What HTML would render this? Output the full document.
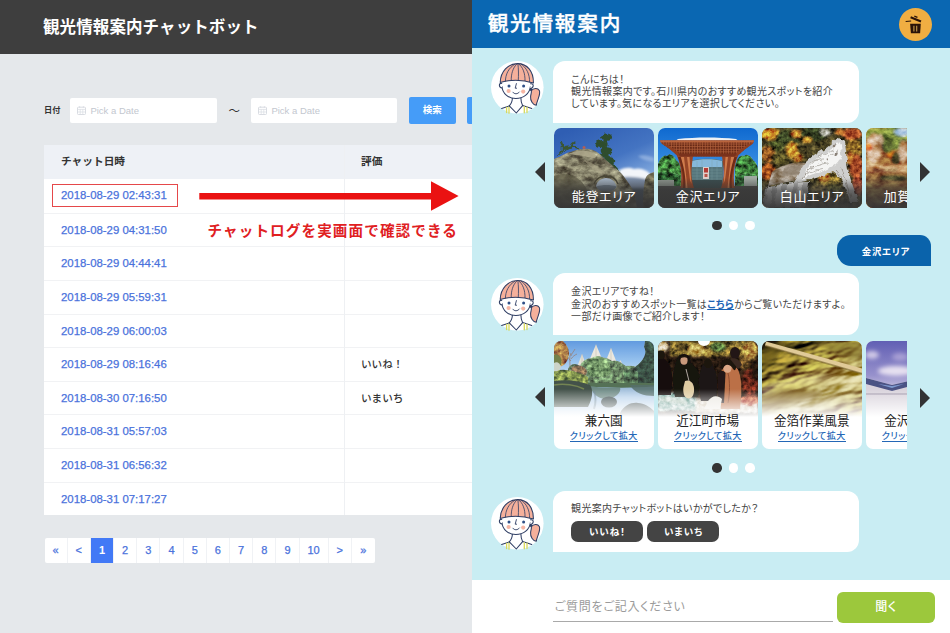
<!DOCTYPE html>
<html lang="ja">
<head>
<meta charset="utf-8">
<title>観光情報案内チャットボット</title>
<style>
*{box-sizing:border-box;margin:0;padding:0}
html,body{width:950px;height:633px;overflow:hidden}
body{position:relative;background:#e5e8eb;font-family:"Liberation Sans","Noto Sans CJK JP",sans-serif;color:#333}
.abs{position:absolute}
/* ---------- left admin ---------- */
#lhead{left:0;top:0;width:473px;height:53.6px;background:#3e3e3e}
#ltitle{left:43px;top:.5px;height:53px;line-height:53px;color:#fff;font-size:16.5px;font-weight:700;white-space:nowrap;letter-spacing:.1px}
.lbl{left:44px;top:105.2px;font-size:8.2px;font-weight:700;line-height:12px;color:#333}
.inp{top:98px;height:25px;background:#fff;border-radius:2px}
.inp span{position:absolute;left:20.4px;top:0;line-height:25px;font-size:9.5px;color:#c3c7cf;white-space:nowrap}
.inp svg{position:absolute;left:7px;top:8px}
.btn{top:97px;height:27px;background:#459cf8;border-radius:2px;color:#fff;font-size:9.5px;font-weight:700;text-align:center;line-height:25px}
#tbl{left:44px;top:145px;width:440px;height:370px;background:#fff}
#thead{left:0;top:0;width:440px;height:34.2px;background:#eef1f6}
.th{top:-.8px;height:34.2px;line-height:34.2px;font-size:10.7px;font-weight:700;color:#333;white-space:nowrap}
.row{left:0;width:440px;height:33.6px;border-top:1px solid #f1f2f4}
.row a{position:absolute;left:17px;top:0;line-height:32.6px;font-size:11.4px;color:#4a72dc;white-space:nowrap;text-decoration:none;-webkit-text-stroke:.25px #4a72dc}
.row span{position:absolute;left:317px;top:0;line-height:32.6px;font-size:10.6px;font-weight:500;color:#333;white-space:nowrap}
#colline{left:300px;top:0;width:1px;height:370px;background:#eef0f3}
#pg{left:44.5px;top:538.3px;height:24.6px;background:#fff;border-radius:2px;display:flex;overflow:hidden}
#pg div{width:23.2px;height:24.6px;line-height:24.6px;text-align:center;font-size:11px;color:#4a72dc;border-right:1px solid #f0f2f5;-webkit-text-stroke:.25px #4a72dc}
#pg div.w{width:29px}
#pg div.on{background:#4279f6;color:#fff;font-weight:700;-webkit-text-stroke:0}
#pg div:last-child{border-right:0}
/* ---------- right chat ---------- */
#chat{left:472.3px;top:0;width:478px;height:633px;background:#c9edf3;overflow:hidden}
#rhead{left:0;top:0;width:478px;height:48.3px;background:#0a67b2}
#rtitle{left:15.4px;top:.4px;height:48px;line-height:48px;color:#fff;font-size:20.6px;font-weight:500;-webkit-text-stroke:.4px #fff;letter-spacing:1.8px;white-space:nowrap}
.jp{font-family:"Liberation Sans","Noto Sans CJK JP",sans-serif;font-feature-settings:"palt"}
.bub{left:80.4px;width:306.6px;background:#fff;border-radius:12px 12px 12px 0;font-size:10px;line-height:12.2px;color:#444;padding:0 0 0 18.4px;white-space:nowrap;letter-spacing:.33px}
.av{left:18px;width:53px;height:53px}
.card{top:0;width:100px;border-radius:7px;overflow:hidden;background:#fff}
.car{left:81.4px;width:353px;overflow:hidden}
.clab{left:0;width:100px;top:60.7px;text-align:center;color:#fff;font-size:13px;line-height:16px;white-space:nowrap;letter-spacing:.6px;padding-left:.6px}
.ct{left:0;width:100px;top:72.500px;text-align:center;font-size:12.600px;line-height:16px;color:#222;white-space:nowrap}
.cl{left:0;width:100px;top:89.500px;text-align:center;font-size:9px;line-height:12px;color:#2467b6;white-space:nowrap;font-weight:500}
.cl span{border-bottom:1px solid #2467b6;letter-spacing:.45px}
.lk{color:#1c63b4;text-decoration:underline;font-weight:700}
.qb{top:520.800px;width:71.600px;height:21.100px;border-radius:7px;background:#444;color:#fff;font-size:9.500px;font-weight:700;line-height:21.100px;text-align:center;letter-spacing:.9px;padding-left:1px}
.tri{width:0;height:0;border-top:10px solid transparent;border-bottom:10px solid transparent}
.tl{border-right:10.5px solid #333}
.tr{border-left:10.5px solid #333}
.dot{width:9.6px;height:9.6px;border-radius:50%;background:#fff}
.dot.k{background:#333}
</style>
</head>
<body>
<!-- LEFT -->
<div id="lhead" class="abs"></div>
<div id="ltitle" class="abs">観光情報案内チャットボット</div>
<div class="abs lbl">日付</div>
<div class="abs inp" style="left:70px;width:147px"><svg width="9" height="9" viewBox="0 0 9 9" fill="none" stroke="#d9dce2" stroke-width="1"><rect x=".5" y="1.2" width="8" height="7.3" rx=".8"/><path d="M.5 3.4h8M2.6 0v2M6.4 0v2M3.2 3.4v5M5.8 3.4v5M.5 6h8" stroke-width=".7"/></svg><span>Pick a Date</span></div>
<div class="abs" style="left:228.5px;top:104px;font-size:11.5px;line-height:14px;color:#333">～</div>
<div class="abs inp" style="left:251px;width:146px"><svg width="9" height="9" viewBox="0 0 9 9" fill="none" stroke="#d9dce2" stroke-width="1"><rect x=".5" y="1.2" width="8" height="7.3" rx=".8"/><path d="M.5 3.4h8M2.6 0v2M6.4 0v2M3.2 3.4v5M5.8 3.4v5M.5 6h8" stroke-width=".7"/></svg><span>Pick a Date</span></div>
<div class="abs btn" style="left:408.7px;width:47px">検索</div>
<div class="abs btn" style="left:466.8px;width:47px"></div>

<div id="tbl" class="abs">
  <div id="thead" class="abs"></div>
  <div class="abs th" style="left:17px">チャット日時</div>
  <div class="abs th" style="left:317px">評価</div>
  <div class="abs row" style="top:34.2px;border-top:0"><a>2018-08-29 02:43:31</a></div>
  <div class="abs row" style="top:67.8px"><a>2018-08-29 04:31:50</a></div>
  <div class="abs row" style="top:101.4px"><a>2018-08-29 04:44:41</a></div>
  <div class="abs row" style="top:135px"><a>2018-08-29 05:59:31</a></div>
  <div class="abs row" style="top:168.6px"><a>2018-08-29 06:00:03</a></div>
  <div class="abs row" style="top:202.2px"><a>2018-08-29 08:16:46</a><span>いいね！</span></div>
  <div class="abs row" style="top:235.8px"><a>2018-08-30 07:16:50</a><span>いまいち</span></div>
  <div class="abs row" style="top:269.4px"><a>2018-08-31 05:57:03</a></div>
  <div class="abs row" style="top:303px"><a>2018-08-31 06:56:32</a></div>
  <div class="abs row" style="top:336.6px"><a>2018-08-31 07:17:27</a></div>
  <div id="colline" class="abs"></div>
</div>
<!-- annotation -->
<div class="abs" style="left:52.2px;top:184.2px;width:125.6px;height:22.8px;border:1px solid #e5484a"></div>
<svg class="abs" style="left:196.5px;top:177.7px" width="270" height="36" viewBox="0 0 270 36"><path d="M2.300 14.900H234V3.200L261.600 18 234 32.800V21.400H2.300Z" fill="#ea1212"/></svg>
<div class="abs" style="left:207.5px;top:221px;font-size:14.6px;line-height:20px;font-weight:700;color:#e0201f;white-space:nowrap;letter-spacing:1.09px">チャットログを実画面で確認できる</div>

<div id="pg" class="abs"><div>«</div><div>&lt;</div><div class="on">1</div><div>2</div><div>3</div><div>4</div><div>5</div><div>6</div><div>7</div><div>8</div><div>9</div><div class="w">10</div><div>&gt;</div><div>»</div></div>

<!-- RIGHT -->
<div id="chat" class="abs">
  <div id="rhead" class="abs"></div>
  <div id="rtitle" class="abs">観光情報案内</div>
  <svg width="0" height="0" style="position:absolute">
    <defs>
      <filter id="b1" x="-20%" y="-20%" width="140%" height="140%"><feGaussianBlur stdDeviation="1"/></filter>
      <filter id="b2" x="-20%" y="-20%" width="140%" height="140%"><feGaussianBlur stdDeviation="2"/></filter>
      <filter id="b3" x="-30%" y="-30%" width="160%" height="160%"><feGaussianBlur stdDeviation="3.5"/></filter>
      <filter id="trock" x="0" y="0" width="100%" height="100%" color-interpolation-filters="sRGB"><feTurbulence type="fractalNoise" baseFrequency=".09 .13" numOctaves="4" seed="7" result="n"/><feColorMatrix in="n" type="matrix" values="1.1 0 0 0 -.07  1.1 0 0 0 -.07  1.1 0 0 0 -.07  0 0 0 0 1" result="g"/><feBlend in="g" in2="SourceGraphic" mode="overlay" result="m"/><feComposite in="m" in2="SourceGraphic" operator="in"/></filter>
      <filter id="tleaf" x="0" y="0" width="100%" height="100%" color-interpolation-filters="sRGB"><feTurbulence type="fractalNoise" baseFrequency=".22" numOctaves="3" seed="11" result="n"/><feColorMatrix in="n" type="matrix" values="1.25 0 0 0 -.12  1.25 0 0 0 -.12  1.25 0 0 0 -.12  0 0 0 0 1" result="g"/><feBlend in="g" in2="SourceGraphic" mode="overlay" result="m"/><feComposite in="m" in2="SourceGraphic" operator="in"/></filter>
      <filter id="tfine" x="0" y="0" width="100%" height="100%" color-interpolation-filters="sRGB"><feTurbulence type="fractalNoise" baseFrequency=".35" numOctaves="2" seed="5" result="n"/><feColorMatrix in="n" type="matrix" values="2 0 0 0 -.5  2 0 0 0 -.5  2 0 0 0 -.5  0 0 0 0 1" result="g"/><feBlend in="g" in2="SourceGraphic" mode="soft-light" result="m"/><feComposite in="m" in2="SourceGraphic" operator="in"/></filter>
      <filter id="rough" x="-10%" y="-10%" width="120%" height="120%"><feTurbulence type="fractalNoise" baseFrequency=".18" numOctaves="2" seed="4" result="n"/><feDisplacementMap in="SourceGraphic" in2="n" scale="5" xChannelSelector="R" yChannelSelector="G" result="d"/><feGaussianBlur in="d" stdDeviation=".45"/></filter>
      <filter id="foil" x="0" y="0" width="100%" height="100%" color-interpolation-filters="sRGB"><feTurbulence type="fractalNoise" baseFrequency=".03 .075" numOctaves="3" seed="9" result="n"/><feDiffuseLighting in="n" surfaceScale="7" diffuseConstant=".86" lighting-color="#ffffff" result="l"><feDistantLight azimuth="240" elevation="38"/></feDiffuseLighting><feBlend in="l" in2="SourceGraphic" mode="overlay" result="m"/><feComposite in="m" in2="SourceGraphic" operator="in"/></filter>
      <filter id="b05" x="-20%" y="-20%" width="140%" height="140%"><feGaussianBlur stdDeviation=".5"/></filter>
      <linearGradient id="dk" x1="0" y1="0" x2="0" y2="1"><stop offset="0" stop-color="#333" stop-opacity="0"/><stop offset=".42" stop-color="#333" stop-opacity=".68"/><stop offset="1" stop-color="#363636" stop-opacity=".96"/></linearGradient>
      <linearGradient id="wf" x1="0" y1="0" x2="0" y2="1"><stop offset="0" stop-color="#fff" stop-opacity="0"/><stop offset="1" stop-color="#fff" stop-opacity="1"/></linearGradient>
      <symbol id="girl" viewBox="0 0 70 70">
        <circle cx="32.3" cy="32.3" r="26.3" fill="#fff"/>
        <g fill="none" stroke="#2e3d63" stroke-width="1.05" stroke-linecap="round" stroke-linejoin="round">
          <!-- ponytail -->
          <path d="M46.3 35.6C48.5 33.2 52.6 32.6 54.3 35.4C56 39 52.6 44 51.2 50.3C47.8 49.6 45.2 45.6 45.6 41.6C45.8 39 46.8 37.6 46.3 35.6Z" fill="#f5b09b"/>
          <!-- shoulders -->
          <path d="M16.6 53.4L24.3 50.9M37.6 50.6L46.8 53.4" />
          <path d="M21.6 52.3V57.6M24 51.6V58.200M39.3 51.6V57.8M42 52.2V57.6" stroke="#d9d95a" stroke-width="1.3"/>
          <path d="M24.300 50.9L31.300 58L37.600 50.600"/>
          <!-- neck -->
          <path d="M27.4 42.600C27.400 46 26.400 48.800 24.300 50.900M35.800 42.200C35.900 45.800 36.400 48.600 37.600 50.600"/>
          <!-- face -->
          <path d="M17 31.500C17.300 38.500 23.500 43.400 30.800 43.400C38.600 43.400 44.800 38.600 45.400 31.500" fill="#fff"/>
          <path d="M16.800 28.400C13.600 27.600 13.400 32.800 17.200 33" fill="#fff"/>
          <path d="M45.600 28.800C49 28 49.200 33.200 45.300 33.400" fill="#fff"/>
          <!-- hair -->
          <path d="M15.200 27.400C15.600 16.600 23 8.600 32.600 8.600C42.200 8.600 48.600 16.400 48.400 28C38 24.800 24.800 24.800 15.200 27.400Z" fill="#f5b09b"/>
          <path d="M32.900 8.800C33.600 14 33.600 20 33.300 25.200M32 8.800C27.600 13 26.200 19 26.200 25.400M33.600 8.800C38 12 40.200 18.600 40 25.600M30 9.200C23.600 12.600 20.400 19.600 20.400 26.200M36 9.200C41.600 12.400 44.800 19.600 44.600 26.800" stroke-width=".8"/>
          <!-- features -->
          <path d="M31.400 28.600L30.200 33.200H31.600" stroke-width=".9"/>
          <path d="M27.800 37.200C29.400 39.400 32.600 39.400 34.400 37" stroke-width=".9"/>
        </g>
        <circle cx="24" cy="31" r="1.500" fill="#2f4f86"/><circle cx="38.600" cy="31" r="1.500" fill="#2f4f86"/>
        <circle cx="23.600" cy="36" r="2.100" fill="#f6b6a4"/><circle cx="38.200" cy="36.600" r="2.100" fill="#f6b6a4"/>
        <circle cx="45.900" cy="34.600" r="1.300" fill="#2e3d63"/>
      </symbol>
    </defs>
  </svg>
  <!-- trash -->
  <div class="abs" style="left:426.8px;top:8.300px;width:33.200px;height:33.200px;border-radius:50%;background:#f0ae42"></div>
  <svg class="abs" style="left:431px;top:12px" width="25" height="25" viewBox="0 0 25 25"><g fill="#2a1309"><path d="M7.100 11.700H17.800L17.100 21.200H7.900Z"/><path d="M8 4.300L18.400 8.600L17.600 10.500L7.200 6.200Z"/><path d="M11.600 3.500L14.700 4.800L14.200 6L11.100 4.700Z"/><path d="M2.600 9L8.100 8.500L8.200 9.600L2.700 10Z"/></g><path d="M10.900 13.700V19.600M13.700 13.700V19.600" stroke="#c69a4a" stroke-width="1.100"/></svg>

  <!-- msg 1 -->
  <svg class="abs" style="left:12.4px;top:55px" width="70" height="70"><use href="#girl" width="70" height="70"/></svg>
  <div class="abs bub jp" style="top:60.800px;height:61.9px;padding-top:13.2px">こんにちは！<br>観光情報案内です。石川県内のおすすめ観光スポットを紹介<br>しています。気になるエリアを選択してください。</div>
  <div class="abs tri tl" style="left:62.400px;top:161.600px"></div>
  <div class="abs tri tr" style="left:447.900px;top:161.900px"></div>
  <div class="abs car" style="top:128.100px;height:79.800px">
    <!-- card 1 noto -->
    <div class="abs card" style="left:0;height:79.800px">
      <svg class="abs" style="left:0;top:0" width="100" height="80" viewBox="0 0 100 80">
        <defs><linearGradient id="s1" x1=".2" y1="0" x2=".75" y2="1"><stop offset="0" stop-color="#2f5eb3"/><stop offset=".45" stop-color="#4474c2"/><stop offset=".75" stop-color="#7ea6dc"/><stop offset="1" stop-color="#a9c4e6"/></linearGradient></defs>
        <rect width="100" height="80" fill="url(#s1)"/>
        <g filter="url(#b1)">
          <path d="M84 28C90 26 96 28 100 30V34C94 33 88 32 84 28Z" fill="#9bb8e2" opacity=".7"/>
          <path d="M60 48C64 40 74 38 80 41C86 39 94 42 98 48L100 54H58Z" fill="#f3f5f9"/>
          <path d="M58 52C68 47 82 48 100 53V66H58Z" fill="#8091ab"/>
          <path d="M58 60H100V80H58Z" fill="#4f5e72"/>
        </g>
        <g filter="url(#b05)">
          <path d="M91 52C92 47 96 45 100 44V80H89C89 70 89 60 91 52Z" fill="#777259" filter="url(#trock)"/>
          <g filter="url(#rough)"><g fill="none" stroke="#3a5632" stroke-linecap="round">
            <path d="M5 26C8 21 12 19 16 19.500M8 23C10 18 8 15 7 13M12 22C16 18.500 21 18 25 20M17 20C16.500 17.500 18 15.500 20 14.500" stroke-width="2"/>
            </g>
            <g fill="#2f4d2e">
            <path d="M47 9C49 5 54 4.500 57 7C59 9 58 12 55 12.500C52 14 48 13 47 9Z"/>
            <path d="M41 15C44 11 50 11.500 53 14C55 17 52 19.500 48 19C45 19.500 42 18 41 15Z"/>
            <path d="M47 20C51 17 57 18 59 21.500C60 25 56 27 52 26C48 26 46 23 47 20Z"/>
            <path d="M45 25.500C48 24 52 25 54 27L52 30C49 30 46 28 45 25.500Z"/>
            <path d="M50 29C54 27 59 28.500 61 32C62 35 59 37 56 36C53 35 50 32.500 50 29Z"/>
            <path d="M55 36C59 35 63 38 66 42C67 45 64 45.500 61 44C58 42 56 39 55 36Z"/>
            </g></g>
          <path d="M0 31C3 29.500 7 28 11 26C15 24 20 22.500 25 21.500C30 20.500 35 20.500 39 22C44 24 48 28 52 32C58 37 64 42 68 46C72 51 76 57 79 62C81 67 82 73 83 80H0Z" fill="#86826a" filter="url(#trock)"/>
          <path d="M0 48C8 44 18 46 26 52C32 58 36 66 38 80H0Z" fill="#5d5946" opacity=".75"/>
          <path d="M14 26C22 22 32 21.500 40 25C44 29 42 31 36 29.500C28 27 20 27 14 26Z" fill="#aea88c" opacity=".85"/>
          <path d="M30 32C38 34 46 40 52 46C46 46 38 42 30 32Z" fill="#a39d82" opacity=".6"/>
          <path d="M42 58C43 53 47 50.500 52 50C57 50 61 53 62.500 58C62 61 59 63 53 63C47 63 43 61 42 58Z" fill="#a4b2c1"/>
          <path d="M42.500 58.500C48 56.500 57 56.500 62.500 58.500C61 62 58 63.500 53 63.500C47 63.500 43.500 62 42.500 58.500Z" fill="#6f7e8c"/>
          <path d="M40 56C42 50 48 47.500 53 48C58 48 62 51 64 56" fill="none" stroke="#4a4636" stroke-width="1.500"/>
          <circle cx="30" cy="19.500" r="1.500" fill="#b55f52"/>
        </g>
        <rect y="50" width="100" height="30" fill="url(#dk)"/>
      </svg>
      <div class="abs clab jp">能登エリア</div>
    </div>
    <!-- card 2 kanazawa -->
    <div class="abs card" style="left:104px;height:79.800px">
      <svg class="abs" style="left:0;top:0" width="100" height="80" viewBox="0 0 100 80">
        <defs><linearGradient id="s2" x1="0" y1="0" x2="0" y2="1"><stop offset="0" stop-color="#0f69cf"/><stop offset=".5" stop-color="#3a90e4"/><stop offset=".8" stop-color="#8cc0ee"/></linearGradient>
        <pattern id="lat" width="2.600" height="2.600" patternUnits="userSpaceOnUse"><rect width="2.600" height="2.600" fill="#6b2a17"/><path d="M0 .4H2.600M.4 0V2.600" stroke="#b0603a" stroke-width=".7"/></pattern></defs>
        <rect width="100" height="80" fill="url(#s2)"/>
        <g filter="url(#b05)">
          <path d="M0 36C2 30 6 26 9 28C12 24 16 28 18 32C22 34 23 40 23 46V60H0Z" fill="#3f7d3b" filter="url(#tleaf)"/>
          <path d="M0 46C6 42 14 44 22 48V60H0Z" fill="#2a5a2e" filter="url(#tleaf)"/>
          <path d="M77 40C78 32 82 26 86 28C89 25 93 28 95 32C98 34 100 38 100 42V58H77Z" fill="#3d7c3a" filter="url(#tleaf)"/>
          <path d="M79 48C86 44 94 46 100 48V58H79Z" fill="#2c5c30" filter="url(#tleaf)"/>
          <rect x="0" y="58" width="100" height="22" fill="#4c4c4a"/>
          <rect x="86" y="48" width="13" height="10" fill="#a0a9a2"/>
          <rect x="0" y="52" width="16" height="6" fill="#8c948c"/>
        </g>
        <g filter="url(#b05)">
          <path d="M33 33C40 30 58 30 65 33V60H33Z" fill="#54757b"/>
          <path d="M34 33C42 30.500 56 30.500 64 33V39H34Z" fill="#86b8da"/>
          <path d="M34 42H64M34 45H64M34 48H64M34 51H64M39 33V56M44 32V56M54 32V56M59 33V56" stroke="#7f9da0" stroke-width=".5" opacity=".7"/>
          <rect x="34" y="52" width="30" height="8" fill="#3a4d50"/>
          <rect x="45" y="39" width="6" height="12" fill="#ddd0cc"/>
          <rect x="46" y="40" width="4" height="4.500" fill="#b43a34"/>
          <rect x="46.500" y="46" width="3" height="3" fill="#b8524a"/>
          <path d="M20 11C38 9 60 9 78 11L80 12.500H18Z" fill="#eef1f3"/>
          <path d="M2 12.500H96L95 15.500C90 19 84 23 79 28.500H20C15 23 9 19 3.500 15.500Z" fill="url(#lat)"/>
          <path d="M2 12.200H96L95.400 14.600H2.600Z" fill="#b9653e"/>
          <path d="M3.500 15.500C9 19 15 23 20 28.500H24C18 22 12 18 6 15.500ZM95 15.500C90 19 84 23 79 28.500H75C81 22 87 18 92.500 15.500Z" fill="#8f4124"/>
          <path d="M19 28H35C34 36 33 42 33.500 48C34 53 35 57 36 60H22.500C23.500 52 23.500 46 22.500 40C21.500 35 20.500 31 19 28Z" fill="#964425"/>
          <path d="M23 29L27 60H29.500L26 29ZM29 29L32 52L33.500 56L31.500 29Z" fill="#cf7b4c"/>
          <path d="M20 29C24 38 26 50 25 60H27.500C28 50 26 38 22.500 29Z" fill="#6d2c18"/>
          <path d="M80 28H64C65 36 66 42 65.500 48C65 53 64 57 63 60H76.500C75.500 52 75.500 46 76.500 40C77.500 35 78.500 31 80 28Z" fill="#964425"/>
          <path d="M76 29L72 60H69.500L73 29ZM70 29L67 52L65.500 56L67.500 29Z" fill="#cf7b4c"/>
          <path d="M79 29C75 38 73 50 74 60H71.500C71 50 73 38 76.500 29Z" fill="#6d2c18"/>
          <path d="M20 25.500H79L77 28.500H22Z" fill="#7a321c"/>
        </g>
        <rect y="50" width="100" height="30" fill="url(#dk)"/>
      </svg>
      <div class="abs clab jp">金沢エリア</div>
    </div>
    <!-- card 3 hakusan -->
    <div class="abs card" style="left:208px;height:79.800px">
      <svg class="abs" style="left:0;top:0" width="100" height="80" viewBox="0 0 100 80">
        <rect width="100" height="80" fill="#463f22"/>
        <g filter="url(#tleaf)"><rect width="100" height="80" fill="#463f22"/>
        <g filter="url(#b1)">
          <ellipse cx="8" cy="6" rx="10" ry="6" fill="#c98628"/>
          <ellipse cx="26" cy="10" rx="12" ry="8" fill="#3e4a26"/>
          <ellipse cx="14" cy="18" rx="8" ry="6" fill="#4a5228"/>
          <ellipse cx="36" cy="6" rx="8" ry="4" fill="#c07a2a"/>
          <ellipse cx="6" cy="26" rx="7" ry="8" fill="#925620"/>
          <ellipse cx="18" cy="30" rx="8" ry="7" fill="#5a5226"/>
          <ellipse cx="30" cy="22" rx="6" ry="8" fill="#c9922e"/>
          <ellipse cx="36" cy="30" rx="5" ry="5" fill="#b8782a"/>
          <ellipse cx="52" cy="6" rx="14" ry="7" fill="#343f22"/>
          <ellipse cx="45" cy="12" rx="5" ry="3" fill="#cc8c2e"/>
          <ellipse cx="64" cy="4" rx="6" ry="4" fill="#a8a89a"/>
          <ellipse cx="6" cy="44" rx="8" ry="9" fill="#9c4c1e"/>
          <ellipse cx="12" cy="54" rx="8" ry="4" fill="#6a5a2a"/>
          <ellipse cx="90" cy="6" rx="10" ry="6" fill="#a84c26"/>
          <ellipse cx="78" cy="4" rx="5" ry="3" fill="#c06a2a"/>
          <ellipse cx="92" cy="20" rx="8" ry="9" fill="#8f6a28"/>
          <ellipse cx="94" cy="38" rx="7" ry="12" fill="#a44a26"/>
          <ellipse cx="88" cy="30" rx="4" ry="6" fill="#b86c2c"/>
          <ellipse cx="96" cy="58" rx="6" ry="10" fill="#a2432a"/>
          <ellipse cx="68" cy="54" rx="12" ry="10" fill="#7f6a2a"/>
          <ellipse cx="62" cy="50" rx="6" ry="5" fill="#b98230"/>
          <ellipse cx="72" cy="62" rx="8" ry="6" fill="#5d5a2a"/>
          <ellipse cx="58" cy="62" rx="8" ry="6" fill="#6a5a30"/>
        </g></g>
        <g filter="url(#b05)">
          <path d="M10 44C20 36 34 33 46 35L44 50L6 58Z" fill="#a39583" filter="url(#trock)"/>
          <path d="M22 40C30 37 38 37 44 38L42 46L20 48Z" fill="#8a7d6c" opacity=".6"/>
          </g><g filter="url(#rough)">
          <path d="M75 10.500C78 10 81 11 83 13C84 20 84 28 85 34C86 42 88 50 91 58C93 64 95 69 97 74L88 74C86 66 83 58 79 52C77 48 74 45 71 43C66 46 60 48 54 50C48 52 40 54 30 56C34 50 37 44 41 38C44 33 48 30 54 26C62 22 69 17 75 10.500Z" fill="#cfcfce"/>
          <path d="M62 25C68 22 74 19 78 14C81 22 80 30 74 36C68 41 60 44 52 46C48 48 44 49 40 51C43 43 48 36 54 31C57 28 59 27 62 25Z" fill="#f4f4f3"/>
          <path d="M48 36C52 32 58 30 62 30M46 42C52 38 60 36 66 35M56 28C62 26 68 24 72 22M44 47C50 44 56 42 62 41M66 28C70 27 74 25 77 22M52 33C55 32 57 32 60 33" stroke="#a9a6a0" stroke-width=".8" fill="none"/>
          <path d="M40 50C44 44 48 40 52 37M78 40C82 48 86 58 89 70M74 42C76 44 78 47 80 50" stroke="#9a948c" stroke-width="1" fill="none"/>
          <path d="M71 17L74 16.500L73 20L70.500 20.500ZM73 25L76 24.500L75 27.500L72.500 28ZM64 31L67 30L65 33Z" fill="#8a8178"/>
          <path d="M3 61C14 56 30 54 47 54L43 80H1Z" fill="#bdbdbc"/>
          <path d="M5 61L10 58.500L9 80H4ZM14 58L20 57L19 80H13ZM25 56L31 55.500L29 80H23ZM36 55L41 54.500L39 80H34Z" fill="#f2f2f1"/>
          </g><g>
        </g>
        <rect y="50" width="100" height="30" fill="url(#dk)"/>
      </svg>
      <div class="abs clab jp">白山エリア</div>
    </div>
    <!-- card 4 kaga -->
    <div class="abs card" style="left:312px;height:79.800px">
      <svg class="abs" style="left:0;top:0" width="100" height="80" viewBox="0 0 100 80">
        <rect width="100" height="80" fill="#a8763e"/>
        <g filter="url(#trock)"><rect width="100" height="80" fill="#a8763e"/>
        <g filter="url(#b1)">
          <rect x="0" y="0" width="100" height="10" fill="#93a03f"/>
          <ellipse cx="28" cy="10" rx="13" ry="12" fill="#76893a"/>
          <ellipse cx="36" cy="4" rx="8" ry="4" fill="#a9c4e0"/>
          <ellipse cx="8" cy="20" rx="8" ry="15" fill="#d1b08e"/>
          <ellipse cx="14" cy="14" rx="4" ry="8" fill="#b89878"/>
          <ellipse cx="3" cy="19" rx="3.500" ry="4" fill="#d4622a"/>
          <ellipse cx="37" cy="24" rx="4.500" ry="12" fill="#ccac8c"/>
          <ellipse cx="25" cy="26" rx="4" ry="3.500" fill="#e29c2c"/>
          <ellipse cx="22" cy="18" rx="6" ry="7" fill="#5d6a30"/>
          <ellipse cx="30" cy="30" rx="4" ry="6" fill="#4a4428"/>
          <path d="M0 32C10 37 24 40 41 35V44H0Z" fill="#cba070"/>
          <path d="M6 40C14 42 24 42 32 40L30 43H8Z" fill="#7a5a38"/>
          <rect x="0" y="44" width="60" height="12" fill="#9a6a3a"/>
          <ellipse cx="28" cy="50" rx="14" ry="3" fill="#5d5a30"/>
        </g></g>
        <rect y="46" width="100" height="34" fill="url(#dk)"/>
      </svg>
      <div class="abs clab jp">加賀エリア</div>
    </div>
  </div>
  <div class="abs dot k" style="left:240.100px;top:220.600px"></div>
  <div class="abs dot" style="left:256.500px;top:220.600px"></div>
  <div class="abs dot" style="left:273.200px;top:220.600px"></div>
  <!-- user bubble -->
  <div class="abs jp" style="left:364.900px;top:234.700px;width:93.400px;height:31.200px;background:#0a63ab;border-radius:14px 11px 0 14px;color:#fff;font-size:9.4px;font-weight:700;line-height:33.4px;text-align:center;letter-spacing:.7px;padding-left:4px">金沢エリア</div>
  <!-- msg 2 -->
  <svg class="abs" style="left:12.4px;top:272px" width="70" height="70"><use href="#girl" width="70" height="70"/></svg>
  <div class="abs bub jp" style="top:273.300px;height:61.9px;padding-top:13.2px">金沢エリアですね！<br>金沢のおすすめスポット一覧は<a class="lk">こちら</a>からご覧いただけますよ。<br>一部だけ画像でご紹介します！</div>
  <div class="abs tri tl" style="left:62.400px;top:387.300px"></div>
  <div class="abs tri tr" style="left:447.900px;top:387.600px"></div>
  <div class="abs car" style="top:340.600px;height:108.700px">
    <!-- card A kenrokuen -->
    <div class="abs card" style="left:0;height:108.700px">
      <svg class="abs" style="left:0;top:0" width="100" height="76" viewBox="0 0 100 76">
        <defs><linearGradient id="s3" x1="0" y1="0" x2="0" y2="1"><stop offset="0" stop-color="#4a8bdc"/><stop offset=".25" stop-color="#86b8ec"/><stop offset=".45" stop-color="#c4def5"/></linearGradient>
        <linearGradient id="pd" x1="0" y1="0" x2="0" y2="1"><stop offset="0" stop-color="#7fa3c6"/><stop offset=".4" stop-color="#b4d0ec"/><stop offset="1" stop-color="#d6e6f4"/></linearGradient></defs>
        <rect width="100" height="76" fill="url(#s3)"/>
        <g filter="url(#b05)">
          <path d="M0 0H9C15 5 17 13 13 20C10 26 4 27 0 25Z" fill="#a66c2a" filter="url(#tleaf)"/>
          <path d="M0 14C5 12 9 18 7 24L0 27Z" fill="#5f6c2c"/>
          <path d="M16 26C16 20 15 16 17 12M17 18C19 15 21 14 23 13M17 20C14 17 13 15 12 13M17 15C18 12 20 10 21 8" stroke="#8a6048" stroke-width=".8" fill="none" opacity=".8"/>
          <path d="M42 3.500L48.500 19H35.500Z" fill="#eee8dc"/>
          <path d="M57 7L62.500 21H51.500Z" fill="#eee8dc"/>
          <path d="M28 13L32.500 25H23.500Z" fill="#e6dfd1"/>
          <path d="M66.500 19L69.500 26H63.500Z" fill="#ddd8cc"/>
          <path d="M42 3.500V19M57 7V21M28 13V25" stroke="#b9ae98" stroke-width=".5"/>
          <path d="M14 28C16 22 22 22 26 25C28 19 36 15 44 18C48 15 54 17 58 20C62 18 68 22 72 25C78 24 84 26 90 28L100 30V44H14Z" fill="#55744a" filter="url(#tleaf)"/>
          <path d="M18 26C24 23 31 25 33 30C33 36 27 38 21 36C17 33 16 29 18 26Z" fill="#7a5a38" filter="url(#tleaf)"/>
          <path d="M32 24C34 17 42 13 48 16C54 18 58 24 57 32C54 38 40 38 34 34Z" fill="#668f52" opacity=".85" filter="url(#tleaf)"/>
          <path d="M91 0H100V42H82C77 37 77 29 82 25C88 21 94 13 90 6Z" fill="#1e3526" filter="url(#tleaf)"/>
          <path d="M70 30C74 27 80 28 84 31L84 42H70Z" fill="#3a5a38" filter="url(#tleaf)"/>
          <path d="M0 30C10 27 24 30 34 36V46H0Z" fill="#748832" filter="url(#tleaf)"/>
          <path d="M0 22C3 20 6 22 7 26C6 30 2 31 0 30Z" fill="#c9cfbf"/>
          <rect x="0" y="43" width="100" height="33" fill="url(#pd)"/>
          <path d="M34 42H100V45.500C80 47 56 47 34 45.500Z" fill="#3b5a38"/>
          <path d="M36 45C46 47 56 47 66 46C68 52 60 58 52 58C44 58 38 52 36 45Z" fill="#4c6a5a" opacity=".8"/>
          <path d="M76 44H100V55C90 55 80 52 76 44Z" fill="#3c5852" opacity=".85"/>
          <path d="M0 40C12 38 26 40 36 44C40 50 38 58 34 66H0Z" fill="#27352a"/>
          <path d="M0 44C10 42 22 44 30 48" stroke="#5f7034" stroke-width="1.500" fill="none"/>
          <ellipse cx="55" cy="61" rx="8" ry="5.500" fill="#2f3c3c"/>
          <path d="M66 72C70 64 78 61 84 62C90 62 96 66 100 70V76H66Z" fill="#3c4a4c"/>
          <path d="M40 50C42 56 42 62 40 68" stroke="#55707e" stroke-width="2" fill="none" opacity=".6"/>
        </g>
        <rect width="100" height="76" fill="#dfeaf5" opacity=".16"/>
        <rect y="48" width="100" height="28" fill="url(#wf)"/>
      </svg>
      <div class="abs ct jp">兼六園</div><div class="abs cl jp"><span>クリックして拡大</span></div>
    </div>
    <!-- card B omicho -->
    <div class="abs card" style="left:104px;height:108.700px">
      <svg class="abs" style="left:0;top:0" width="100" height="76" viewBox="0 0 100 76">
        <rect width="100" height="76" fill="#2a1c12"/>
        <g filter="url(#tleaf)"><rect width="100" height="76" fill="#2a1c12"/>
        <g filter="url(#b1)">
          <rect x="12" y="0" width="84" height="15" fill="#7f6a2e"/>
          <ellipse cx="38" cy="9" rx="9" ry="6" fill="#c0a552"/>
          <ellipse cx="24" cy="6" rx="6" ry="5" fill="#5a4a22"/>
          <ellipse cx="60" cy="6" rx="8" ry="5" fill="#54733a"/>
          <ellipse cx="50" cy="12" rx="5" ry="4" fill="#a88a3c"/>
          <ellipse cx="92" cy="10" rx="8" ry="9" fill="#b08a40"/>
          <ellipse cx="86" cy="22" rx="5" ry="6" fill="#7a5a2a"/>
          <ellipse cx="4" cy="5" rx="7" ry="6" fill="#d4c096"/>
          <ellipse cx="92" cy="42" rx="8" ry="14" fill="#6e2c1e"/>
          <ellipse cx="97" cy="30" rx="4" ry="10" fill="#20160f"/>
          <path d="M0 52C14 50 28 54 40 58V70H0Z" fill="#8fb5ad"/>
          <path d="M4 56C12 55 22 57 30 60L28 64L2 60Z" fill="#c9d8cf"/>
          <rect x="38" y="58" width="62" height="14" fill="#dcd4c6"/>
          <ellipse cx="92" cy="60" rx="10" ry="5" fill="#c2583a"/>
          <ellipse cx="6" cy="48" rx="6" ry="3" fill="#b04a34"/>
        </g></g>
        <g filter="url(#b05)">
          <path d="M0 18C5 15 11 20 13 28C15 36 14 46 13 54H0Z" fill="#14100d"/>
          <ellipse cx="3" cy="14" rx="4" ry="4.500" fill="#1c1410"/>
          <path d="M17 24C18 16 22 13 26 13C31 13 33 17 33 22C39 25 42 32 42 42L40 56H17C14 42 14 32 17 24Z" fill="#161210"/>
          <ellipse cx="26" cy="19.500" rx="3.600" ry="4.200" fill="#c99a7c"/>
          <path d="M21 19C21 13 31 12 31.500 19C30 16 24 15 21 19Z" fill="#1a120e"/>
          <path d="M28 28L31 40" stroke="#d9d2c4" stroke-width=".8"/>
          <path d="M27 40C31 38 35.500 41 36 47C36.500 53 34.500 57.500 30.500 57.500C26.500 57.500 24.500 52 25.500 46Z" fill="#dfcca2"/>
          <path d="M44 25C47 19 55 20 56 27C60 33 60 46 58 60H43C40 44 40 33 44 25Z" fill="#1a1512"/>
          <ellipse cx="50" cy="22" rx="4" ry="4.500" fill="#1f1611"/>
          <path d="M64 28C68 23 79 23 81 31C84 40 84 52 82 68H63C61 50 61 38 64 28Z" fill="#bb7046" />
          <path d="M60 33C62 29 65.500 29 67.500 32L66 62H60Z" fill="#211915"/>
          <path d="M70 32C72 40 72 52 70 62" stroke="#8f4e30" stroke-width="1" fill="none"/>
          <ellipse cx="69.500" cy="27" rx="4.200" ry="4.800" fill="#dba887"/>
          <path d="M62.500 25C62 17 76 15 78 24C78.500 29 76.500 31 74.500 27C71 22.500 66.500 22.500 64.500 29Z" fill="#1b130f"/>
          <ellipse cx="77" cy="12" rx="5" ry="6" fill="#231913"/>
          <path d="M72 18C76 16 82 18 84 24L80 28Z" fill="#3a2a20"/>
          <path d="M50 60C54 54 60 54 64 58L62 68H46Z" fill="#ece9e2"/>
        </g>
        <rect y="48" width="100" height="28" fill="url(#wf)"/>
        <path d="M40 0A6 5 0 0 0 52 0Z" fill="#fff"/>
      </svg>
      <div class="abs ct jp">近江町市場</div><div class="abs cl jp"><span>クリックして拡大</span></div>
    </div>
    <!-- card C gold -->
    <div class="abs card" style="left:208px;height:108.700px">
      <svg class="abs" style="left:0;top:0" width="100" height="76" viewBox="0 0 100 76">
        <defs><linearGradient id="g3" x1="0" y1="0" x2=".35" y2="1"><stop offset="0" stop-color="#4e400e"/><stop offset=".3" stop-color="#786824"/><stop offset=".55" stop-color="#a08a3e"/><stop offset=".75" stop-color="#c2b474"/><stop offset="1" stop-color="#937830"/></linearGradient></defs>
        <g filter="url(#foil)" transform="rotate(-14 50 38)"><rect x="-20" y="-20" width="140" height="120" fill="url(#g3)"/></g>
        <g filter="url(#b2)">
          <path d="M0 0H26L0 12Z" fill="#2a220d"/>
          <path d="M0 10C8 6 16 4 24 4L10 22L0 30Z" fill="#6b5a1c" opacity=".8"/>
          <path d="M0 46C30 34 70 30 100 40V46C70 39 30 43 0 53Z" fill="#efe6b4" opacity=".45"/>
          <path d="M0 54C20 47 44 47 62 52C44 60 20 66 0 72Z" fill="#866a24" opacity=".85"/>
          <path d="M50 0H100V20C84 18 66 10 50 0Z" fill="#7c6a24" opacity=".6"/>
        </g>
        <path d="M4 .5L100 27.500V32.500L3 4.600Z" fill="#e0ca98" filter="url(#b05)"/>
        <path d="M4 4L100 31.800V33.500L3 5.400Z" fill="#7a6630" opacity=".6" filter="url(#b05)"/>
        <rect y="48" width="100" height="28" fill="url(#wf)"/>
      </svg>
      <div class="abs ct jp">金箔作業風景</div><div class="abs cl jp"><span>クリックして拡大</span></div>
    </div>
    <!-- card D castle -->
    <div class="abs card" style="left:312px;height:108.700px">
      <svg class="abs" style="left:0;top:0" width="100" height="76" viewBox="0 0 100 76">
        <defs><linearGradient id="s4" x1="0" y1="0" x2="0" y2="1"><stop offset="0" stop-color="#615fb4"/><stop offset=".45" stop-color="#9791cc"/><stop offset=".65" stop-color="#cbc6e2"/></linearGradient></defs>
        <rect width="100" height="76" fill="url(#s4)"/>
        <g filter="url(#b2)">
          <ellipse cx="6" cy="14" rx="7" ry="4" fill="#cfc8e6"/>
          <ellipse cx="30" cy="30" rx="18" ry="5" fill="#e6e0f0"/>
          <ellipse cx="34" cy="16" rx="8" ry="4" fill="#a79fd4"/>
        </g>
        <g filter="url(#b05)">
          <path d="M0 37L26 44L60 36V76H0Z" fill="#d9d3dc"/>
          <path d="M0 37L26 44L60 36L60 41L26 50L0 43Z" fill="#4b5284"/>
          <path d="M12 43L26 47L38 43L26 45Z" fill="#7f9bd0"/>
          <path d="M0 52H60V54H0Z" fill="#b8b0bf"/>
        </g>
        <rect y="48" width="100" height="28" fill="url(#wf)"/>
      </svg>
      <div class="abs ct jp">金沢城公園</div><div class="abs cl jp"><span>クリックして拡大</span></div>
    </div>
  </div>
  <div class="abs dot k" style="left:240.100px;top:463.200px"></div>
  <div class="abs dot" style="left:256.500px;top:463.200px"></div>
  <div class="abs dot" style="left:273.200px;top:463.200px"></div>
  <!-- msg 3 -->
  <svg class="abs" style="left:13.2px;top:491px" width="70" height="70"><use href="#girl" width="70" height="70"/></svg>
  <div class="abs bub jp" style="top:490.500px;height:61.5px;padding-top:12.6px">観光案内チャットボットはいかがでしたか？</div>
  <div class="abs qb jp" style="left:98.800px">いいね！</div>
  <div class="abs qb jp" style="left:175px">いまいち</div>
  <!-- footer -->
  <div class="abs" style="left:0;top:579.500px;width:478px;height:54px;background:#fff"></div>
  <div class="abs jp" style="left:82.400px;top:598.6px;font-size:12px;line-height:17px;color:#9b9b9b;letter-spacing:.75px;white-space:nowrap">ご質問をご記入ください</div>
  <div class="abs" style="left:80.400px;top:620.800px;width:280.800px;height:1.300px;background:#a9a9a9"></div>
  <div class="abs jp" style="left:364.900px;top:592px;width:97.600px;height:30.600px;border-radius:6px;background:#9cc83c;color:#fff;font-size:12px;font-weight:500;line-height:30.600px;text-align:center;letter-spacing:.5px">聞く</div>

</div>
</body>
</html>
